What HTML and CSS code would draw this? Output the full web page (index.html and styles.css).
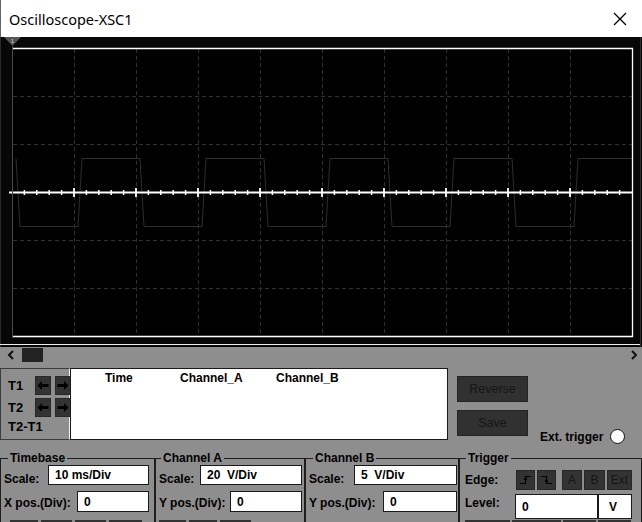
FILE: index.html
```html
<!DOCTYPE html>
<html>
<head>
<meta charset="utf-8">
<title>Oscilloscope-XSC1</title>
<link rel="stylesheet" href="styles.css">
</head>
<body>
<div class="titlebar">
  <span class="title">Oscilloscope-XSC1</span>
  <svg class="close" width="14" height="14" viewBox="0 0 14 14"><path d="M1 1L13 13M13 1L1 13" stroke="#000" stroke-width="1.3" fill="none"/></svg>
</div>

<div class="scope">
  <svg width="642" height="310" viewBox="0 37 642 310">
    <rect x="0" y="37" width="642" height="310" fill="#070707"/>
    <line x1="0.5" y1="37" x2="0.5" y2="347" stroke="#2a2a2a"/>
    <line x1="640.5" y1="37" x2="640.5" y2="347" stroke="#2e2e2e"/>
    <rect x="12" y="48" width="620" height="288" fill="#000"/>
    <g stroke="#303030" stroke-width="1" stroke-dasharray="4 3" fill="none">
      <path d="M74.5 49V336M136.5 49V336M198.5 49V336M260.5 49V336M322.5 49V336M384.5 49V336M446.5 49V336M508.5 49V336M570.5 49V336"/>
      <path d="M13 96.5H632M13 144.5H632M13 240.5H632M13 288.5H632"/>
    </g>
    <polyline fill="none" stroke="#2e2e2e" stroke-width="1" points="16,158.5 20,226.5 78,226.5 82,158.5 140,158.5 144,226.5 202,226.5 206,158.5 264,158.5 268,226.5 326,226.5 330,158.5 388,158.5 392,226.5 450,226.5 454,158.5 512,158.5 516,226.5 574,226.5 578,158.5 632,158.5"/>
    <path stroke="#fff" stroke-width="2" d="M9 192.5H632"/>
    <path stroke="#fff" stroke-width="1.5" d="M24.4 190v5M36.8 190v5M49.2 190v5M61.6 190v5M86.4 190v5M98.8 190v5M111.2 190v5M123.6 190v5M148.4 190v5M160.8 190v5M173.2 190v5M185.6 190v5M210.4 190v5M222.8 190v5M235.2 190v5M247.6 190v5M272.4 190v5M284.8 190v5M297.2 190v5M309.6 190v5M334.4 190v5M346.8 190v5M359.2 190v5M371.6 190v5M396.4 190v5M408.8 190v5M421.2 190v5M433.6 190v5M458.4 190v5M470.8 190v5M483.2 190v5M495.6 190v5M520.4 190v5M532.8 190v5M545.2 190v5M557.6 190v5M582.4 190v5M594.8 190v5M607.2 190v5M619.6 190v5"/>
    <path stroke="#fff" stroke-width="1.8" d="M74 188v9M136 188v9M198 188v9M260 188v9M322 188v9M384 188v9M446 188v9M508 188v9M570 188v9"/>
    <path stroke="#fff" stroke-width="1.3" fill="none" d="M12 48.5H632.5V336.5H12"/>
    <line x1="12.5" y1="46" x2="12.5" y2="337" stroke="#4a4a4a"/>
    <polygon points="4,37 21,37 12.5,46" fill="#555"/>
    <text x="12.5" y="43" font-size="5" fill="#ddd" text-anchor="middle" font-family="Liberation Sans, sans-serif">1</text>
    <line x1="0" y1="344.5" x2="640" y2="344.5" stroke="#eee"/>
  </svg>
</div>

<div class="scrollbar">
  <svg class="chev" width="8" height="10" viewBox="0 0 8 10"><path d="M6 1L2 5L6 9" stroke="#111" stroke-width="2" fill="none"/></svg>
  <div class="thumb"></div>
  <div class="spacer"></div>
  <svg class="chev" width="8" height="10" viewBox="0 0 8 10"><path d="M2 1L6 5L2 9" stroke="#111" stroke-width="2" fill="none"/></svg>
</div>

<div class="readout">
  <div class="cursors">
    <div class="cur-grid">
      <span class="cur-label">T1</span>
      <span class="arrow-btn"><svg width="14" height="17" viewBox="0 0 14 17"><path d="M1.5 8.5L6 4V7H12.5V10H6V13Z" fill="#000"/></svg></span>
      <span class="arrow-btn"><svg width="14" height="17" viewBox="0 0 14 17"><path d="M12.5 8.5L8 4V7H1.5V10H8V13Z" fill="#000"/></svg></span>
      <span class="cur-label">T2</span>
      <span class="arrow-btn"><svg width="14" height="17" viewBox="0 0 14 17"><path d="M1.5 8.5L6 4V7H12.5V10H6V13Z" fill="#000"/></svg></span>
      <span class="arrow-btn"><svg width="14" height="17" viewBox="0 0 14 17"><path d="M12.5 8.5L8 4V7H1.5V10H8V13Z" fill="#000"/></svg></span>
    </div>
    <div class="cur-diff">T2-T1</div>
  </div>
  <div class="databox">
    <div class="hdr"><span>Time</span><span>Channel_A</span><span>Channel_B</span></div>
  </div>
  <div class="actions">
    <div class="btn">Reverse</div>
    <div class="btn">Save</div>
  </div>
  <div class="ext"><span>Ext. trigger</span><span class="radio"></span></div>
</div>

<div class="controls">
  <fieldset class="fs fs-time">
    <legend>Timebase</legend>
    <div class="row r1"><span class="lbl">Scale:</span><span class="field w-101">10 ms/Div</span></div>
    <div class="row r2"><span class="lbl">X pos.(Div):</span><span class="field w-72">0</span></div>
    <div class="btnrow"><span class="blk w-28"></span><span class="blk w-31"></span><span class="blk w-31"></span><span class="blk w-33"></span></div>
  </fieldset>
  <fieldset class="fs fs-cha">
    <legend>Channel A</legend>
    <div class="row r1"><span class="lbl">Scale:</span><span class="field w-102">20  V/Div</span></div>
    <div class="row r2"><span class="lbl">Y pos.(Div):</span><span class="field w-72">0</span></div>
    <div class="btnrow"><span class="blk w-27"></span><span class="blk w-28"></span><span class="blk w-31"></span></div>
  </fieldset>
  <fieldset class="fs fs-chb">
    <legend>Channel B</legend>
    <div class="row r1"><span class="lbl">Scale:</span><span class="field w-103">5  V/Div</span></div>
    <div class="row r2"><span class="lbl">Y pos.(Div):</span><span class="field w-74">0</span></div>
  </fieldset>
  <fieldset class="fs fs-trig">
    <legend>Trigger</legend>
    <div class="row t1">
      <span class="lbl">Edge:</span>
      <div class="edge-group">
        <span class="ebtn e-edge"><svg width="17" height="18" viewBox="0 0 17 18"><path d="M3 12.5H8.5V5.5H14M7 8.5L8.5 7L10 8.5" stroke="#000" stroke-width="1.2" fill="none"/></svg></span>
        <span class="ebtn e-edge gap2"><svg width="17" height="18" viewBox="0 0 17 18"><path d="M3 5.5H8.5V12.5H14M7 9.5L8.5 11L10 9.5" stroke="#000" stroke-width="1.2" fill="none"/></svg></span>
        <span class="ebtn e-a">A</span>
        <span class="ebtn e-b gap2">B</span>
        <span class="ebtn e-ext gap2">Ext</span>
      </div>
    </div>
    <div class="row t2">
      <span class="lbl">Level:</span>
      <span class="field level">0</span><span class="field unit">V</span>
    </div>
    <div class="btnrow"><span class="blk w-45"></span><span class="blk w-49"></span><span class="blk w-33"></span><span class="blk w-33"></span></div>
  </fieldset>
</div>
</body>
</html>
```

FILE: styles.css
```css
* { box-sizing: border-box; }
html, body { margin: 0; padding: 0; }
body {
  width: 642px;
  height: 522px;
  overflow: hidden;
  background: #8e8e8e;
  font-family: "Liberation Sans", Arial, sans-serif;
  font-size: 12px;
  line-height: 14px;
  color: #000;
}

/* title bar */
.titlebar {
  height: 37px;
  background: #fff;
  border-left: 1px solid #666;
  display: flex;
  align-items: center;
  justify-content: space-between;
  padding: 0 15px 0 8px;
}
.title { font-family: "Noto Sans", sans-serif; font-size: 14.5px; line-height: 20px; }
.close { display: block; }

/* scope */
.scope { height: 310px; background: #070707; }
.scope svg { display: block; }

/* scrollbar */
.scrollbar { height: 20px; display: flex; align-items: flex-start; padding: 0 4px 0 7px; }
.chev { display: block; margin-top: 3px; }
.thumb { width: 21px; height: 14px; margin: 1px 0 0 7px; background: #232323; }
.spacer { flex: 1; }

/* readout row */
.readout { height: 78px; display: flex; align-items: flex-start; padding-top: 1px; }
.cursors {
  width: 70px;
  height: 72px;
  border: 1px solid #3c3c3c;
  border-right-color: #f0f0f0;
  padding: 7px 0 0 7px;
}
.cur-grid {
  display: grid;
  grid-template-columns: 23px 16px 16px;
  column-gap: 4px;
  row-gap: 3px;
  grid-auto-rows: 19px;
  align-items: center;
}
.cur-label, .cur-diff { font-size: 13px; font-weight: bold; }
.cur-diff { margin-top: 3px; }
.arrow-btn {
  width: 16px;
  height: 19px;
  background: #333;
  border: 1px solid #282828;
  display: flex;
  align-items: center;
  justify-content: center;
}
.arrow-btn svg { display: block; }
.databox { width: 378px; height: 72px; background: #fff; border: 1px solid #1a1a1a; }
.hdr {
  display: grid;
  grid-template-columns: 75px 96px auto;
  padding: 2px 0 0 34px;
  font-weight: bold;
}
.actions { margin: 8px 0 0 9px; width: 71px; display: flex; flex-direction: column; gap: 8px; }
.btn {
  height: 26px;
  background: #313131;
  border: 1px solid #242424;
  color: #161616;
  font-size: 12.5px;
  display: flex;
  align-items: center;
  justify-content: center;
}
.ext { margin: 61px 0 0 12px; display: flex; align-items: center; gap: 7px; font-weight: bold; }
.radio { width: 15px; height: 15px; border-radius: 50%; background: #fff; border: 1.5px solid #111; }

/* controls */
.controls { height: 77px; display: flex; padding-top: 6px; }
.fs {
  margin: 0;
  min-width: 0;
  border: 1px solid #1e1e1e;
  border-bottom: 0;
  padding: 0 0 0 3px;
}
.fs legend { padding: 0 2px; margin-left: 4px; font-weight: bold; line-height: 14px; }
.fs-time { width: 155px; padding-right: 5px; }
.fs-cha { width: 150px; padding-right: 2px; }
.fs-cha legend { margin-left: 2px; }
.fs-chb { width: 154px; padding-right: 1px; }
.fs-trig { width: 183px; padding: 0 9px 0 5px; }
.fs-trig legend { margin-left: 1px; }

.row { display: flex; align-items: center; }
.r1 { height: 20px; }
.r2 { height: 21px; margin-top: 6px; }
.lbl { font-weight: bold; white-space: nowrap; }
.r1 .lbl { padding-top: 8px; }
.r2 .lbl { padding-top: 2px; }
.field {
  margin-left: auto;
  height: 100%;
  background: #fff;
  border: 1px solid #1a1a1a;
  padding-left: 6px;
  font-weight: bold;
  white-space: pre;
  display: flex;
  align-items: center;
}
.w-101 { width: 101px; }
.w-102 { width: 102px; }
.w-103 { width: 103px; }
.w-72 { width: 72px; }
.w-74 { width: 74px; }

.t1 { height: 20px; margin-top: 5px; }
.t2 { height: 25px; margin-top: 4px; }
.t2 .lbl { padding-bottom: 7px; }
.edge-group { margin-left: auto; display: flex; }
.ebtn {
  height: 20px;
  background: #333;
  border: 1px solid #272727;
  color: #161616;
  display: flex;
  align-items: center;
  justify-content: center;
}
.ebtn svg { display: block; }
.e-edge { width: 19px; }
.e-a { width: 20px; margin-left: 6px; }
.e-b { width: 21px; }
.e-ext { width: 25px; }
.gap2 { margin-left: 2px; }
.level { width: 83px; }
.unit { margin-left: 0; width: 34px; padding-left: 10px; }

.btnrow { display: flex; height: 10px; gap: 3px; margin-top: 8px; }
.fs-time .btnrow { margin-left: 6px; }
.fs-trig .btnrow { margin-top: 1px; gap: 2px; }
.blk { display: block; height: 10px; background: #333; }
.w-27 { width: 27px; }
.w-28 { width: 28px; }
.w-31 { width: 31px; }
.w-33 { width: 33px; }
.w-45 { width: 45px; }
.w-49 { width: 49px; }
```
